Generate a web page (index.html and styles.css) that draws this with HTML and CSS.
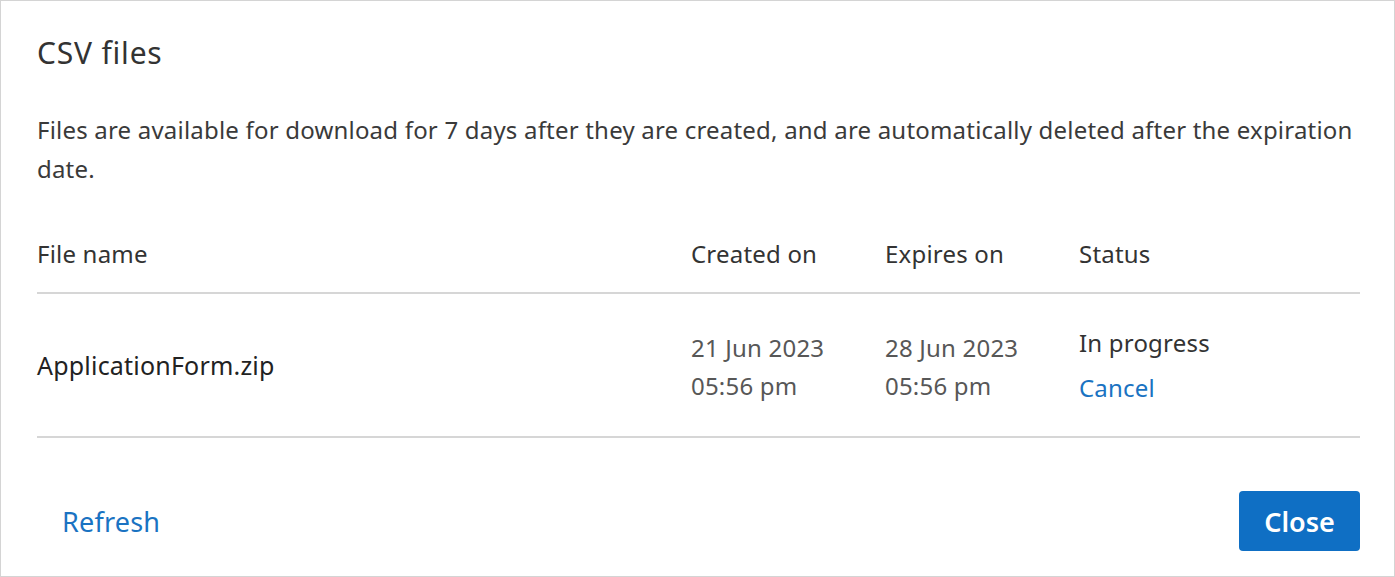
FILE: index.html
```html
<!DOCTYPE html>
<html lang="en">
<head>
<meta charset="utf-8">
<title>CSV files</title>
<link rel="stylesheet" href="styles.css">
</head>
<body>
<div class="dialog">
  <h1 class="title">CSV files</h1>
  <p class="intro">Files are available for download for 7 days after they are created, and are automatically deleted after the expiration date.</p>
  <div class="table">
    <div class="row head">
      <div class="cell">File name</div>
      <div class="cell">Created on</div>
      <div class="cell">Expires on</div>
      <div class="cell">Status</div>
    </div>
    <div class="row body">
      <div class="cell name">ApplicationForm.zip</div>
      <div class="cell date">21 Jun 2023<br>05:56 pm</div>
      <div class="cell date">28 Jun 2023<br>05:56 pm</div>
      <div class="cell status">
        <span class="state">In progress</span>
        <a class="link cancel" href="#">Cancel</a>
      </div>
    </div>
  </div>
  <div class="footer">
    <a class="link refresh" href="#">Refresh</a>
    <button class="btn-primary" type="button">Close</button>
  </div>
</div>
</body>
</html>
```

FILE: styles.css
```css
* { box-sizing: border-box; }
html, body { margin: 0; padding: 0; background: #fff; }
body {
  font-family: "Noto Sans", sans-serif;
  color: #333;
  letter-spacing: 0.2px;
}
.dialog {
  width: 1395px;
  height: 577px;
  border: 1px solid #d4d4d4;
  padding: 30px 34px 0 36px;
  display: flex;
  flex-direction: column;
}
.title {
  margin: 0;
  font-size: 30px;
  font-weight: 400;
  line-height: 44px;
  letter-spacing: 0.8px;
  color: #333;
}
.intro {
  margin: 35px 0 0;
  font-size: 24px;
  line-height: 39px;
  color: #3a3a3a;
}
.table {
  margin-top: 51px;
}
.row {
  display: grid;
  grid-template-columns: 654px 194px 194px 1fr;
  border-bottom: 2px solid #d6d6d6;
}
.head {
  height: 55px;
  font-size: 24px;
  line-height: 30px;
  color: #333;
}
.body {
  height: 144px;
  align-items: center;
}
.name {
  font-size: 25px;
  font-weight: 400;
  color: #222;
}
.date {
  font-size: 24px;
  line-height: 38px;
  color: #575757;
  padding-top: 4px;
}
.status {
  display: flex;
  flex-direction: column;
  font-size: 24px;
  line-height: 45px;
}
.state { color: #333; }
.link {
  color: #1a73c2;
  text-decoration: none;
}
.footer {
  margin-top: 53px;
  display: flex;
  justify-content: space-between;
  align-items: center;
}
.refresh {
  font-size: 27px;
  margin-left: 25px;
}
.btn-primary {
  width: 121px;
  height: 60px;
  border: none;
  border-radius: 4px;
  background: #0f6fc4;
  color: #fff;
  font-family: "Noto Sans", sans-serif;
  font-size: 27px;
  font-weight: 600;
  cursor: pointer;
}
```
